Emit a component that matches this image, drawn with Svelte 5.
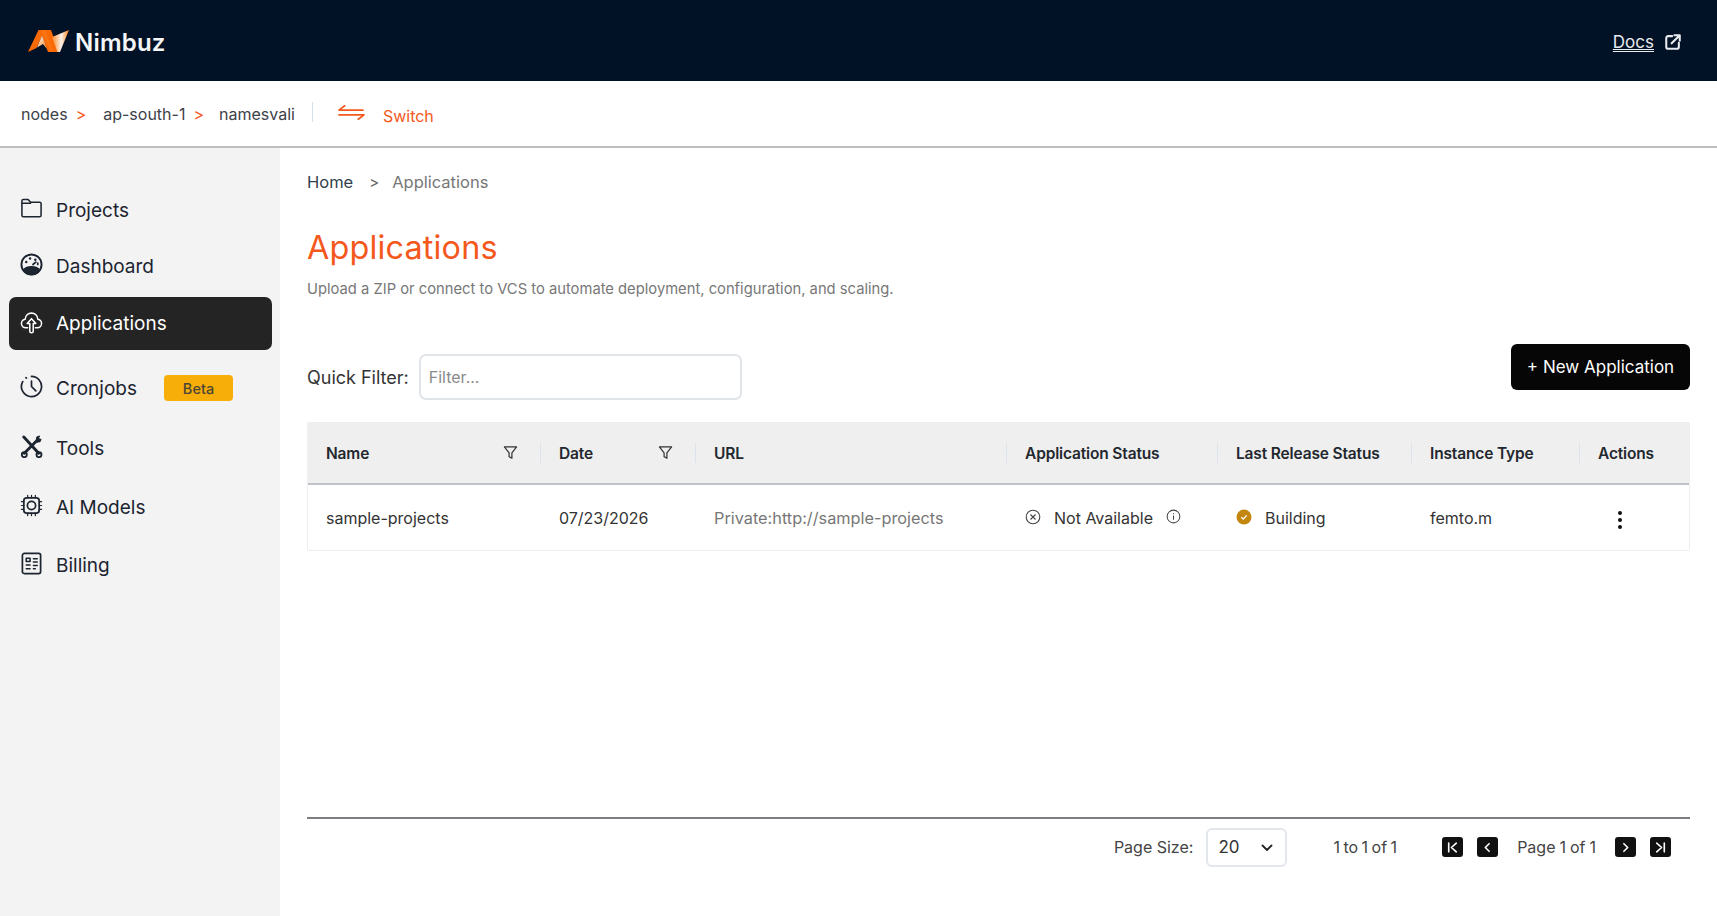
<script>
  const nav = [
    { label: 'Projects', icon: 'folder', h: 56 },
    { label: 'Dashboard', icon: 'gauge', h: 56 },
    { label: 'Applications', icon: 'cloud', h: 53, active: true },
    { label: 'Cronjobs', icon: 'clock', h: 60, badge: 'Beta' },
    { label: 'Tools', icon: 'tools', h: 60 },
    { label: 'AI Models', icon: 'chip', h: 58 },
    { label: 'Billing', icon: 'bill', h: 58 }
  ];
  const cols = [
    { label: 'Name', filter: true },
    { label: 'Date', filter: true },
    { label: 'URL' },
    { label: 'Application Status' },
    { label: 'Last Release Status' },
    { label: 'Instance Type' },
    { label: 'Actions' }
  ];
</script>

{#snippet icon(name)}
  <svg class="nav-icon" viewBox="0 0 24 24" fill="none" stroke="currentColor" stroke-width="1.6" stroke-linecap="round" stroke-linejoin="round">
    {#if name === 'folder'}
      <path d="M2 4A1.500 1.500 0 0 1 3.500 2.500h5l2.500 3h9.500A1.500 1.500 0 0 1 22 7v12a1.500 1.500 0 0 1-1.500 1.500h-17A1.500 1.500 0 0 1 2 19z" />
      <path d="M2 6.500h9" />
    {:else if name === 'gauge'}
      <circle cx="12" cy="12" r="10.500" stroke-width="2" />
      <path d="M3.500 18a9 5.500 0 0 1 17 0 10.500 10.500 0 0 1-17 0z" fill="currentColor" />
      <circle cx="6.500" cy="9.500" r="1.300" fill="currentColor" stroke="none" />
      <circle cx="10.500" cy="5.800" r="1.300" fill="currentColor" stroke="none" />
      <circle cx="16" cy="7" r="1.300" fill="currentColor" stroke="none" />
      <path d="M13.500 12l3-2.500M18.500 10.500v1.500" stroke-width="1.800" />
    {:else if name === 'cloud'}
      <path d="M8 17.500H6a4.500 4.500 0 0 1-.6-8.960A6.800 6.800 0 0 1 12 2a6.800 6.800 0 0 1 6.600 6.540A4.500 4.500 0 0 1 18 17.500h-2" />
      <path d="M7.500 13L12 8l4.500 5h-2.700v8a1.800 1.800 0 0 1-3.600 0v-8z" />
    {:else if name === 'clock'}
      <path d="M12 1.500a10.500 10.500 0 1 1-9.200 5.400" stroke-width="1.800" />
      <path d="M6.200 2.800l.5.300M12 6.500V12l4.500 4.500" stroke-width="1.800" />
    {:else if name === 'tools'}
      <path d="M4 2L19.500 19M19 4.500L4.500 19" stroke-width="3" />
      <circle cx="4.500" cy="20.500" r="2.600" stroke-width="2" />
      <circle cx="19.800" cy="20.500" r="2.600" stroke-width="2" />
      <path d="M17 5l.5-3 3-1-1.500 3 3 .5-1 2.500-3 .5z" fill="currentColor" stroke-width="1" />
    {:else if name === 'chip'}
      <rect x="4" y="4" width="16" height="16" rx="3" stroke-width="1.800" />
      <circle cx="12" cy="12" r="4.300" stroke-width="1.800" />
      <path d="M8 1.500v2.500M12 1.500v2.500M16 1.500v2.500M8 20v2.500M12 20v2.500M16 20v2.500M1.500 8H4M1.500 12H4M1.500 16H4M20 8h2.500M20 12h2.500M20 16h2.500" stroke-width="1.300" />
    {:else}
      <rect x="2.500" y="1.500" width="19" height="21" rx="2" stroke-width="1.800" />
      <path d="M6.500 6.500h4v3.500h-4zM6.500 13.500h4M6.500 17.500h4M14 7h4M14 10.500h4M14 14h4M14 17.500h2" stroke-width="1.600" />
    {/if}
  </svg>
{/snippet}

<div class="page">
  <header class="top">
    <div class="brand">
      <svg class="logo" viewBox="0 0 42 24">
        <defs>
          <linearGradient id="g1" x1="0" y1="0" x2="1" y2="1">
            <stop offset="0" stop-color="#fbf6f1" />
            <stop offset="1" stop-color="#ff8a2a" />
          </linearGradient>
          <linearGradient id="g2" x1="0" y1="0" x2="1" y2="0">
            <stop offset="0" stop-color="#ff8a2a" />
            <stop offset=".55" stop-color="#f7f2ec" />
            <stop offset="1" stop-color="#ff7a10" />
          </linearGradient>
        </defs>
        <path d="M0 23L10.500 1H23L31 23H20L14 7 8.500 19z" fill="#f96a06" />
        <path d="M9 18.500L14 6.500 19 20 15 15z" fill="url(#g1)" />
        <path d="M13 1h4l8 20h-3z" fill="#fb7410" />
        <path d="M41 1L24 8l5.500 15H32z" fill="url(#g2)" />
      </svg>
      <span class="brand-name">Nimbuz</span>
    </div>
    <a class="docs" href="#docs">
      <span>Docs</span>
      <svg viewBox="0 0 20 20" fill="none" stroke="currentColor" stroke-width="2.300" stroke-linecap="round" stroke-linejoin="round">
        <path d="M9 3.500H4.500a2 2 0 0 0-2 2V15.500a2 2 0 0 0 2 2H14.500a2 2 0 0 0 2-2V11" />
        <path d="M8.500 11.500L17.500 2.500M11.500 2.500h6v6" />
      </svg>
    </a>
  </header>

  <div class="context">
    <div class="crumbs">
      <span>nodes</span><span class="gt first">&gt;</span>
      <span class="second">ap-south-1</span><span class="gt">&gt;</span>
      <span class="third">namesvali</span>
    </div>
    <span class="divider"></span>
    <svg class="switch-icon" viewBox="0 0 28 16" fill="none" stroke="currentColor" stroke-width="1.700" stroke-linecap="round" stroke-linejoin="round">
      <path d="M7 1L1 5.500H26M21 15l6-4.500H1" />
    </svg>
    <span class="switch">Switch</span>
  </div>

  <div class="body">
    <aside class="side">
      {#each nav as item}
        <div class="nav-item" class:active={item.active} style="height:{item.h}px">
          {@render icon(item.icon)}
          <span>{item.label}</span>
          {#if item.badge}<span class="badge">{item.badge}</span>{/if}
        </div>
      {/each}
    </aside>

    <main class="main">
      <nav class="path"><span class="home">Home</span><span class="sep">&gt;</span><span class="cur">Applications</span></nav>
      <h1>Applications</h1>
      <p class="sub">Upload a ZIP or connect to VCS to automate deployment, configuration, and scaling.</p>

      <div class="toolbar">
        <label class="filter">
          <span>Quick Filter:</span>
          <input placeholder="Filter..." />
        </label>
        <button class="new">+ New Application</button>
      </div>

      <div class="table">
        <div class="row head">
          {#each cols as c, i}
            <div class="th" class:first={i === 0}>
              <span>{c.label}</span>
              {#if c.filter}
                <svg class="funnel" viewBox="0 0 16 16" fill="none" stroke="currentColor" stroke-width="1.300" stroke-linejoin="round">
                  <path d="M1.500 2h13L9.500 8.500V14l-3-1.500v-4z" />
                </svg>
              {/if}
            </div>
          {/each}
        </div>
        <div class="row data">
          <div class="td first">sample-projects</div>
          <div class="td">07/23/2026</div>
          <div class="td muted">Private:http://sample-projects</div>
          <div class="td status">
            <svg class="st" viewBox="0 0 16 16" fill="none" stroke="#444" stroke-width="1.100"><circle cx="8" cy="8" r="6.800" /><path d="M5.500 5.500l5 5M10.500 5.500l-5 5" /></svg>
            <span class="st-label">Not Available</span>
            <svg class="info" viewBox="0 0 16 16" fill="none" stroke="#444" stroke-width="1.100"><circle cx="8" cy="8" r="6.800" /><path d="M8 7v4.500M8 4.500v1" /></svg>
          </div>
          <div class="td status">
            <svg class="st" viewBox="0 0 16 16"><circle cx="8" cy="8" r="7.500" fill="#c3860f" /><path d="M5.300 8.200l2 1.900 3.400-3.700" fill="none" stroke="#fff" stroke-width="1.400" /></svg>
            <span class="st-label">Building</span>
          </div>
          <div class="td">femto.m</div>
          <div class="td kebab"><i></i><i></i><i></i></div>
        </div>
      </div>

      <div class="spacer"></div>

      <footer class="pager">
        <span>Page Size:</span>
        <div class="select">
          <span>20</span>
          <svg viewBox="0 0 12 8" fill="none" stroke="#222" stroke-width="1.800" stroke-linecap="round" stroke-linejoin="round"><path d="M1.500 1.500L6 6l4.500-4.500" /></svg>
        </div>
        <span class="count">1 to 1 of 1</span>
        <div class="pbtns left">
          <button class="pb" aria-label="First"><svg viewBox="0 0 12 12"><path d="M2.500 2v8M9.500 2L5 6l4.500 4" /></svg></button>
          <button class="pb" aria-label="Previous"><svg viewBox="0 0 12 12"><path d="M7.500 2.500L4 6l3.500 3.500" /></svg></button>
        </div>
        <span class="pageof">Page 1 of 1</span>
        <div class="pbtns">
          <button class="pb" aria-label="Next"><svg viewBox="0 0 12 12"><path d="M4.500 2.500L8 6l-3.500 3.500" /></svg></button>
          <button class="pb" aria-label="Last"><svg viewBox="0 0 12 12"><path d="M9.500 2v8M2.500 2L7 6l-4.500 4" /></svg></button>
        </div>
      </footer>
    </main>
  </div>
</div>

<style>
  :global(body) {
    margin: 0;
    background: #fff;
    font-family: Inter, "Noto Sans", sans-serif;
    color: #2b2f36;
  }
  .page { width: 1717px; height: 916px; display: flex; flex-direction: column; overflow: hidden; }

  .top {
    height: 81px; flex: none; background: #021226; display: flex; align-items: center;
    justify-content: space-between; padding: 3px 35px 0 28px; box-sizing: border-box;
  }
  .brand { display: flex; align-items: center; gap: 5px; }
  .logo { width: 42px; height: 24px; margin-bottom: 3px; }
  .brand-name { color: #f5f6f7; font-size: 24px; font-weight: 600; letter-spacing: 0.2px; }
  .docs { display: flex; align-items: center; gap: 10px; color: #e9ebee; font-size: 17px; }
  .docs span { text-decoration: underline; text-underline-offset: 3px; }
  .docs svg { width: 18px; height: 18px; }

  .context {
    height: 67px; flex: none; box-sizing: border-box; border-bottom: 2px solid #bdbdbd;
    display: flex; align-items: center; padding: 0 0 0 21px; font-size: 16px; color: #3d4148;
  }
  .crumbs { display: flex; align-items: center; }
  .gt { color: #f4581c; margin-left: 8px; font-size: 16px; }
  .second { margin-left: 17px; }
  .third { margin-left: 15px; }
  .divider { width: 1px; height: 20px; background: #d5dfe9; margin: -4px 0 0 17px; }
  .switch-icon { width: 27px; height: 17px; color: #f4581c; margin: -2px 0 0 25px; }
  .switch { color: #f4581c; margin: 5px 0 0 18px; font-size: 16px; }

  .body { flex: 1; display: flex; min-height: 0; }
  .side {
    width: 280px; flex: none; background: #f3f3f3; box-sizing: border-box;
    padding: 34px 8px 0 9px; display: flex; flex-direction: column;
  }
  .nav-item {
    display: flex; align-items: center; box-sizing: border-box; padding-left: 11px;
    font-size: 19px; color: #1c2430; flex: none;
  }
  .nav-icon { width: 23px; height: 23px; margin: -3px 13px 0 0; flex: none; }
  .nav-item.active { background: #242424; color: #fff; border-radius: 7px; margin: 3px 0 8px; }
  .badge {
    margin-left: 27px; width: 69px; height: 26px; background: #f8ae08; border-radius: 4px;
    display: flex; align-items: center; justify-content: center; font-size: 14.500px; font-weight: 500; color: #4a4534;
  }

  .main { flex: 1; display: flex; flex-direction: column; padding: 0 27px 0 27px; box-sizing: border-box; min-width: 0; }
  .path { display: flex; align-items: center; height: 22px; margin-top: 23px; font-size: 16.500px; }
  .home { color: #33404d; }
  .sep { color: #666; margin: 0 13px 0 16px; font-size: 15px; }
  .cur { color: #777; }
  h1 { margin: 34px 0 0; font-size: 32.300px; line-height: 42px; font-weight: 400; color: #f4581c; letter-spacing: 0.2px; }
  .sub { margin: 11px 0 0; font-size: 14.750px; line-height: 18px; color: #777; }

  .toolbar { display: flex; align-items: flex-start; justify-content: space-between; margin-top: 46px; }
  .filter { display: flex; align-items: center; gap: 10px; font-size: 18px; color: #333; margin-top: 10px; }
  .filter input {
    width: 323px; height: 46px; box-sizing: border-box; border: 2px solid #e1e4e8; border-radius: 7px;
    padding: 0 8px; font: inherit; font-size: 16px; outline: none; background: #fff;
  }
  .filter input::placeholder { color: #8a8a8a; }
  .new {
    width: 179px; height: 46px; background: #060606; color: #fff; border: 0; border-radius: 6px;
    font: inherit; font-size: 17px;
  }

  .table { margin-top: 22px; border: 1px solid #eceef1; border-radius: 2px; }
  .row { display: grid; grid-template-columns: 233px 155px 311px 211px 194px 168px 1fr; }
  .head { height: 62px; background: #efefef; border-bottom: 2px solid #bfc3c9; box-sizing: border-box; }
  .th {
    position: relative; display: flex; align-items: center; justify-content: space-between;
    padding: 0 22px 0 18px; font-size: 15.500px; font-weight: 600; color: #23272e; letter-spacing: -0.15px;
  }
  .th:not(:last-child)::after {
    content: ""; position: absolute; right: 0; top: 20px; height: 20px; width: 1px; background: #dde3ea;
  }
  .funnel { width: 15px; height: 15px; color: #333; margin: -2px 1px 0 0; }
  .data { height: 65px; align-items: center; background: #fff; }
  .td { padding-left: 18px; font-size: 16px; color: #333; white-space: nowrap; }
  .muted { color: #777; font-size: 16.300px; }
  .status { display: flex; align-items: center; }
  .st { width: 16px; height: 16px; margin: -2px 13px 0 0; flex: none; }
  .info { width: 15px; height: 15px; margin: -2px 0 0 13px; }
  .kebab { display: flex; flex-direction: column; align-items: flex-start; gap: 3px; padding-left: 38px; margin-top: 4px; }
  .kebab i { width: 4px; height: 4px; border-radius: 50%; background: #111; }

  .spacer { flex: 1; }
  .pager {
    height: 99px; flex: none; box-sizing: border-box; border-top: 2px solid #7c7e82;
    display: flex; align-items: flex-start; justify-content: flex-end; font-size: 16px; color: #444; line-height: 56px; padding-right: 19px;
  }
  .select {
    width: 81px; height: 39px; margin: 9px 0 0 13px; box-sizing: border-box; border: 2px solid #e3e7ec; border-radius: 6px;
    display: flex; align-items: center; justify-content: space-between; padding: 0 12px 0 10px; font-size: 17px; color: #333; line-height: 1;
  }
  .select svg { width: 12px; height: 8px; }
  .count { margin-left: 46px; word-spacing: -1px; }
  .pbtns { display: flex; gap: 14px; height: 56px; align-items: center; }
  .pbtns.left { margin-left: 45px; }
  .pageof { margin: 0 19px; word-spacing: -0.5px; }
  .pb {
    width: 21px; height: 20px; padding: 0; border: 0; border-radius: 3px; background: #111;
    display: flex; align-items: center; justify-content: center;
  }
  .pb svg { width: 13px; height: 13px; fill: none; stroke: #fff; stroke-width: 1.500; stroke-linecap: round; stroke-linejoin: round; }
</style>
